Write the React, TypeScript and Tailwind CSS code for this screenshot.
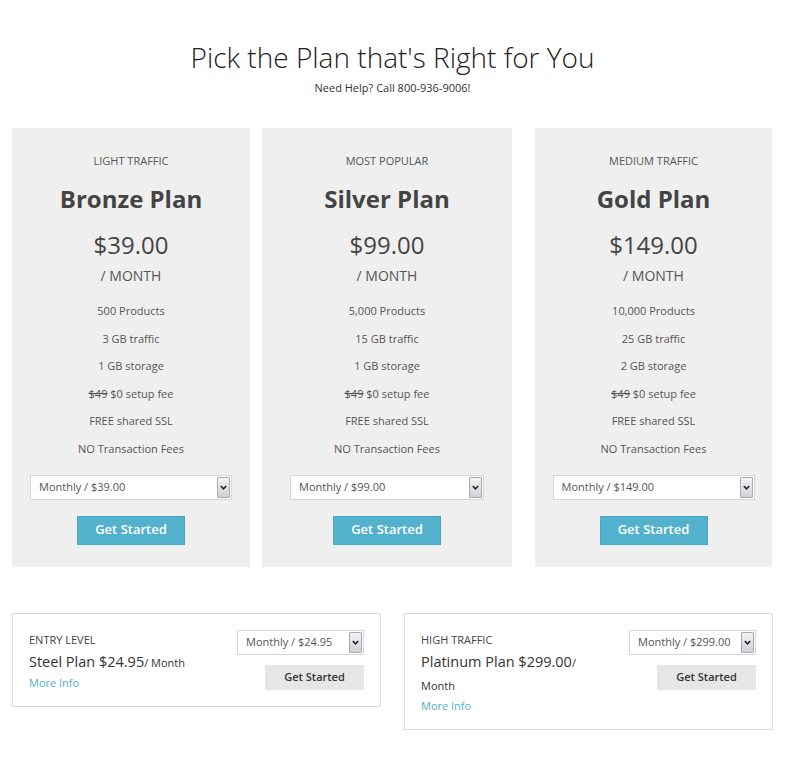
import React from "react";

interface Plan {
	label: string;
	name: string;
	price: string;
	products: string;
	traffic: string;
	storage: string;
	option: string;
	width: string;
	margin: string;
	selectWidth: string;
}

const plans: Plan[] = [
	{
		label: "LIGHT TRAFFIC",
		name: "Bronze Plan",
		price: "$39.00",
		products: "500 Products",
		traffic: "3 GB traffic",
		storage: "1 GB storage",
		option: "Monthly / $39.00",
		width: "w-[238px]",
		margin: "ml-0",
		selectWidth: "w-[202px]",
	},
	{
		label: "MOST POPULAR",
		name: "Silver Plan",
		price: "$99.00",
		products: "5,000 Products",
		traffic: "15 GB traffic",
		storage: "1 GB storage",
		option: "Monthly / $99.00",
		width: "w-[250px]",
		margin: "ml-[12px]",
		selectWidth: "w-[194px]",
	},
	{
		label: "MEDIUM TRAFFIC",
		name: "Gold Plan",
		price: "$149.00",
		products: "10,000 Products",
		traffic: "25 GB traffic",
		storage: "2 GB storage",
		option: "Monthly / $149.00",
		width: "w-[237px]",
		margin: "ml-[23px]",
		selectWidth: "w-[202px]",
	},
];

// Fake select box with the old-style grey arrow button
function SelectBox({ value, width }: { value: string; width: string }) {
	return (
		<div
			className={`${width} h-[25px] flex items-stretch bg-white border border-[#d6d6d6] text-left`}
		>
			<div className="flex-1 flex items-center pl-[8px] text-[11px] text-[#555]">
				{value}
			</div>
			<div className="w-[13px] my-[1px] mr-[1px] border border-[#a9a9b4] rounded-[1px] bg-gradient-to-b from-[#f4f4f6] to-[#cfcfd8] flex items-center justify-center">
				<svg width="7" height="5" viewBox="0 0 7 5">
					<path
						d="M0.8 1 L3.5 3.8 L6.2 1"
						fill="none"
						stroke="#222"
						strokeWidth="1.6"
					/>
				</svg>
			</div>
		</div>
	);
}

function PlanCard({ plan }: { plan: Plan }) {
	const features = [
		plan.products,
		plan.traffic,
		plan.storage,
		"setup",
		"FREE shared SSL",
		"NO Transaction Fees",
	];
	return (
		<div
			className={`${plan.width} ${plan.margin} bg-[#efefef] flex flex-col items-center pt-[25px] pb-[22px] text-center`}
		>
			<div className="text-[11px] leading-[16px] text-[#555]">{plan.label}</div>
			<div className="mt-[14px] text-[24px] leading-[32px] font-bold text-[#444]">
				{plan.name}
			</div>
			<div className="mt-[14px] text-[24px] leading-[32px] text-[#444]">
				{plan.price}
			</div>
			<div className="mt-[5px] text-[14px] leading-[20px] text-[#555]">
				/ MONTH
			</div>
			<ul className="mt-[11px] text-[11px] leading-[27.6px] text-[#555]">
				{features.map((f) =>
					f === "setup" ? (
						<li key={f}>
							<span className="line-through">$49</span> $0 setup fee
						</li>
					) : (
						<li key={f}>{f}</li>
					)
				)}
			</ul>
			<div className="mt-[12px]">
				<SelectBox value={plan.option} width={plan.selectWidth} />
			</div>
			<button className="mt-[16px] w-[108px] h-[29px] bg-[#52b2cd] border border-[#4aa8c2] text-white text-[13px] font-semibold">
				Get Started
			</button>
		</div>
	);
}

function SmallPlan({
	label,
	title,
	option,
	margin,
}: {
	label: string;
	title: string;
	option: string;
	margin: string;
}) {
	return (
		<div
			className={`w-[369px] ${margin} border border-[#dcdcdc] bg-white flex items-start justify-between pl-[16px] pr-[16px] pt-[16px] pb-[14px]`}
		>
			<div className="w-[180px] pt-[2px]">
				<div className="text-[11px] leading-[16px] text-[#444]">{label}</div>
				<div className="mt-[3px] text-[14.5px] leading-[22px] text-[#333]">
					{title}
					<span className="text-[11px]">/ Month</span>
				</div>
				<div className="text-[11px] leading-[18px] text-[#4fb0c8]">More Info</div>
			</div>
			<div className="flex flex-col items-end">
				<SelectBox value={option} width="w-[127px]" />
				<button className="mt-[10px] w-[99px] h-[25px] bg-[#e6e6e6] text-[#333] text-[11px] font-semibold">
					Get Started
				</button>
			</div>
		</div>
	);
}

export default function App() {
	return (
		<div
			className="w-[785px] min-h-[764px] bg-white"
			style={{ fontFamily: "'Open Sans', 'Liberation Sans', sans-serif" }}
		>
			<div className="pt-[39px] text-center">
				<h1 className="text-[28px] leading-[36px] font-light text-[#222]">
					Pick the Plan that's Right for You
				</h1>
				<p className="mt-[5px] text-[11px] leading-[16px] text-[#333]">
					Need Help? Call 800-936-9006!
				</p>
			</div>
			<div className="mt-[32px] pl-[12px] flex items-start">
				{plans.map((p) => (
					<PlanCard key={p.name} plan={p} />
				))}
			</div>
			<div className="mt-[46px] pl-[12px] flex items-start">
				<SmallPlan
					label="ENTRY LEVEL"
					title="Steel Plan $24.95"
					option="Monthly / $24.95"
					margin="ml-0"
				/>
				<SmallPlan
					label="HIGH TRAFFIC"
					title="Platinum Plan $299.00"
					option="Monthly / $299.00"
					margin="ml-[23px]"
				/>
			</div>
		</div>
	);
}
